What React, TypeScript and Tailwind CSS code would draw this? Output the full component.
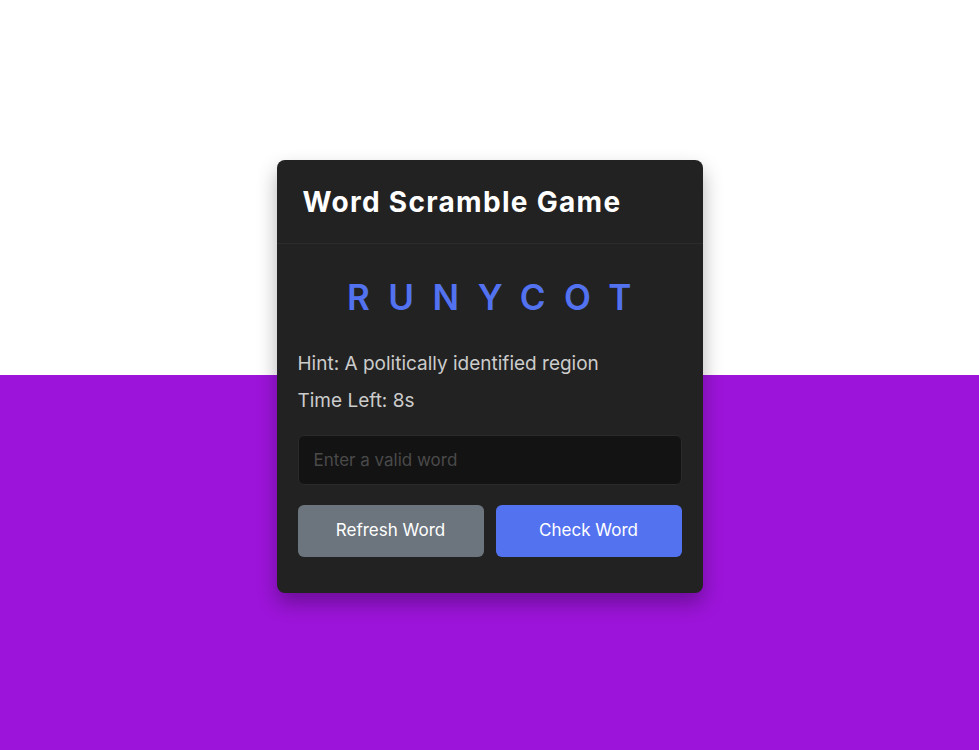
export default function App() {
  return (
    <div
      className="relative flex h-[750px] w-full items-center justify-center bg-[linear-gradient(to_bottom,#ffffff_50%,#9c14d9_50%)]"
      style={{ fontFamily: "Inter, 'Noto Sans', sans-serif" }}
    >
      <div className="mt-[3px] w-[426px] rounded-[8px] bg-[#222222] shadow-[0_10px_20px_rgba(0,0,0,0.3)]">
        <h2 className="border-b border-[#2c2c2c] px-[26px] pb-[24px] pt-[25px] text-[28px] font-bold leading-[34px] tracking-[1.3px] text-white">
          Word Scramble Game
        </h2>
        <div className="px-[21px] pb-[36px] pt-[33px]">
          <p className="pl-[18px] text-center text-[35px] font-semibold leading-[40px] tracking-[18.5px] text-[#5372F0]">
            RUNYCOT
          </p>
          <div className="mt-[34px] flex flex-col gap-[11px] text-[19px] leading-[26px] text-[#cccccc]">
            <p>Hint: A politically identified region</p>
            <p>Time Left: 8s</p>
          </div>
          <input
            type="text"
            placeholder="Enter a valid word"
            className="mt-[21px] h-[50px] w-full rounded-[6px] border border-[#2a2a2a] bg-[#131313] px-[15px] text-[17px] text-white outline-none placeholder:text-[#4a4a4a]"
          />
          <div className="mt-[20px] flex gap-[12px]">
            <button className="h-[52px] flex-1 rounded-[6px] bg-[#6c757d] text-[17px] text-white">
              Refresh Word
            </button>
            <button className="h-[52px] flex-1 rounded-[6px] bg-[#5372F0] text-[17px] text-white">
              Check Word
            </button>
          </div>
        </div>
      </div>
    </div>
  );
}
